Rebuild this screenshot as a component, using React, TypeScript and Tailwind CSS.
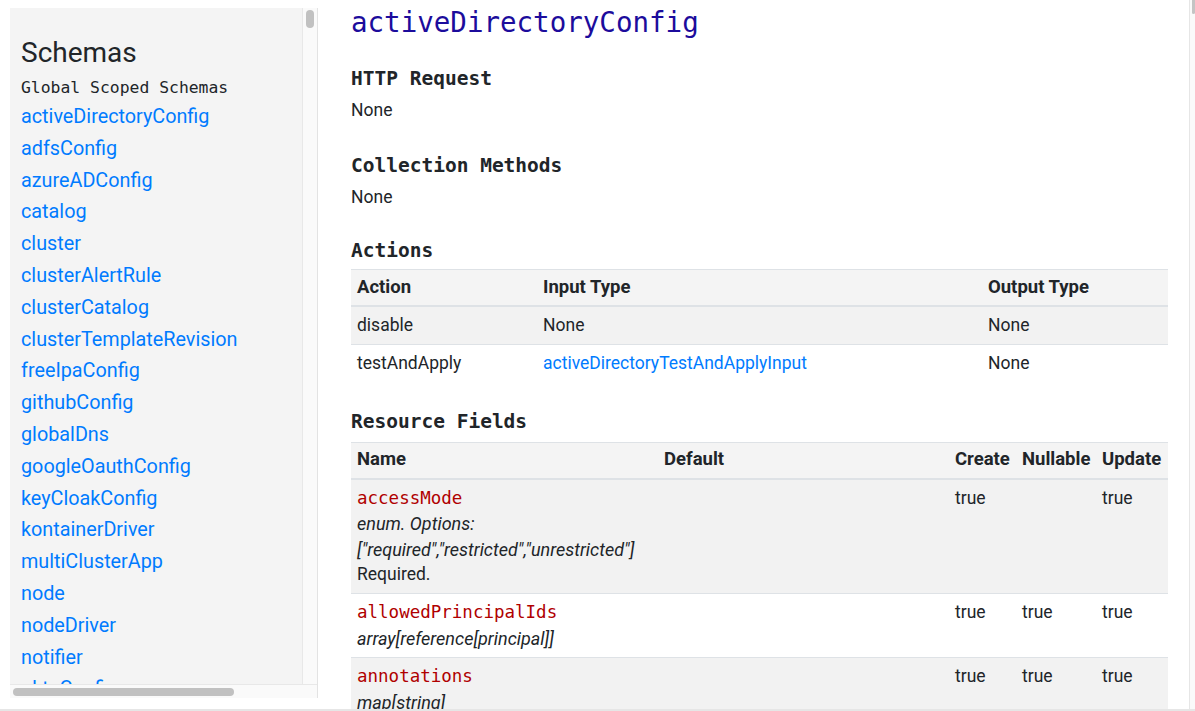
const schemas = [
	"activeDirectoryConfig",
	"adfsConfig",
	"azureADConfig",
	"catalog",
	"cluster",
	"clusterAlertRule",
	"clusterCatalog",
	"clusterTemplateRevision",
	"freeIpaConfig",
	"githubConfig",
	"globalDns",
	"googleOauthConfig",
	"keyCloakConfig",
	"kontainerDriver",
	"multiClusterApp",
	"node",
	"nodeDriver",
	"notifier",
	"oktaConfig",
	"principal",
];

const mono = { fontFamily: '"DejaVu Sans Mono", "Liberation Mono", monospace' };

function Sidebar() {
	return (
		<aside className="mt-[8px] ml-[10px] flex h-[690px] w-[308px] shrink-0 flex-col border-r border-[#e3e3e3]">
			<div className="flex min-h-0 flex-1">
				<div className="flex-1 overflow-hidden bg-[#f4f4f4] pt-[28px] pl-[11px]">
					<h2 className="text-[28px] leading-[34px] text-[#212529]">Schemas</h2>
					<div className="mt-[6px] text-[16.4px] leading-[24px] text-[#212529]" style={mono}>
						Global Scoped Schemas
					</div>
					<ul className="mt-[1px]">
						{schemas.map(name => (
							<li key={name}>
								<a href="#" className="block text-[19.8px] leading-[31.8px] text-[#007bff]">
									{name}
								</a>
							</li>
						))}
					</ul>
				</div>
				<div className="w-[15px] shrink-0 border-l border-[#e8e8e8] bg-[#fafafa] pt-[2px]">
					<div className="mx-auto h-[18px] w-[8px] rounded-full bg-[#c1c1c1]" />
				</div>
			</div>
			<div className="h-[14px] shrink-0 border-t border-[#e8e8e8] bg-[#fafafa] pt-[3px] pl-[3px]">
				<div className="h-[8px] w-[221px] rounded-full bg-[#c1c1c1]" />
			</div>
		</aside>
	);
}

function Th({ children }: { children: React.ReactNode }) {
	return (
		<th className="px-[6px] py-[4.5px] text-left align-top text-[18.5px] font-bold leading-[25.6px] whitespace-nowrap">
			{children}
		</th>
	);
}

function Td({ children }: { children?: React.ReactNode }) {
	return <td className="px-[6px] py-[6px] align-top leading-[25.6px]">{children}</td>;
}

function Code({ children }: { children: React.ReactNode }) {
	return (
		<div className="text-[17.5px] text-[#b00000]" style={mono}>
			{children}
		</div>
	);
}

function Heading({ children, className }: { children: React.ReactNode; className: string }) {
	return (
		<h3 className={`text-[19.5px] leading-[24px] font-bold text-[#212529] ${className}`} style={mono}>
			{children}
		</h3>
	);
}

export default function App() {
	return (
		<div
			className="flex h-[711px] w-[1195px] overflow-hidden border-b-2 border-[#e6e6e6] bg-white text-[17.5px] text-[#212529]"
			style={{ fontFamily: 'Roboto, "Liberation Sans", sans-serif' }}
		>
			<Sidebar />
			<main className="ml-[33px] w-[817px] shrink-0 pt-[5px]">
				<h1 className="text-[27.5px] leading-[34px] text-[#1c0c9c]" style={mono}>
					activeDirectoryConfig
				</h1>

				<Heading className="mt-[28px]">HTTP Request</Heading>
				<p className="mt-[7px] leading-[25.6px]">None</p>

				<Heading className="mt-[30px]">Collection Methods</Heading>
				<p className="mt-[7px] leading-[25.6px]">None</p>

				<Heading className="mt-[29px]">Actions</Heading>
				<table className="mt-[6px] w-full table-fixed border-collapse">
					<colgroup>
						<col className="w-[186px]" />
						<col className="w-[445px]" />
						<col />
					</colgroup>
					<thead>
						<tr className="border-t border-b-2 border-[#dee2e6] bg-[#f4f4f4]">
							<Th>Action</Th>
							<Th>Input Type</Th>
							<Th>Output Type</Th>
						</tr>
					</thead>
					<tbody>
						<tr className="border-b border-[#dee2e6] bg-[#f2f2f2]">
							<Td>disable</Td>
							<Td>None</Td>
							<Td>None</Td>
						</tr>
						<tr>
							<Td>testAndApply</Td>
							<Td>
								<a href="#" className="text-[#007bff]">
									activeDirectoryTestAndApplyInput
								</a>
							</Td>
							<Td>None</Td>
						</tr>
					</tbody>
				</table>

				<Heading className="mt-[27px]">Resource Fields</Heading>
				<table className="mt-[8px] w-full table-fixed border-collapse">
					<colgroup>
						<col className="w-[307px]" />
						<col className="w-[291px]" />
						<col className="w-[67px]" />
						<col className="w-[80px]" />
						<col />
					</colgroup>
					<thead>
						<tr className="border-t border-b-2 border-[#dee2e6] bg-[#f4f4f4]">
							<Th>Name</Th>
							<Th>Default</Th>
							<Th>Create</Th>
							<Th>Nullable</Th>
							<Th>Update</Th>
						</tr>
					</thead>
					<tbody>
						<tr className="border-b border-[#dee2e6] bg-[#f2f2f2]">
							<td className="px-[6px] pt-[6px] pb-[5px] align-top leading-[25.6px]">
								<Code>accessMode</Code>
								<div className="text-[18px] italic">enum. Options:</div>
								<div className="text-[18px] italic whitespace-nowrap">["required","restricted","unrestricted"]</div>
								<div>Required.</div>
							</td>
							<Td />
							<Td>true</Td>
							<Td />
							<Td>true</Td>
						</tr>
						<tr className="border-b border-[#dee2e6]">
							<Td>
								<Code>allowedPrincipalIds</Code>
								<div className="text-[18px] italic">array[reference[principal]]</div>
							</Td>
							<Td />
							<Td>true</Td>
							<Td>true</Td>
							<Td>true</Td>
						</tr>
						<tr className="bg-[#f2f2f2]">
							<Td>
								<Code>annotations</Code>
								<div className="text-[18px] italic">map[string]</div>
							</Td>
							<Td />
							<Td>true</Td>
							<Td>true</Td>
							<Td>true</Td>
						</tr>
					</tbody>
				</table>
			</main>
			<div className="ml-auto w-[6px] shrink-0 border-l border-[#e6e6e6] bg-[#fafafa]">
				<div className="ml-auto h-[14px] w-[3px] rounded-b bg-[#c4c4c4]" />
			</div>
		</div>
	);
}
